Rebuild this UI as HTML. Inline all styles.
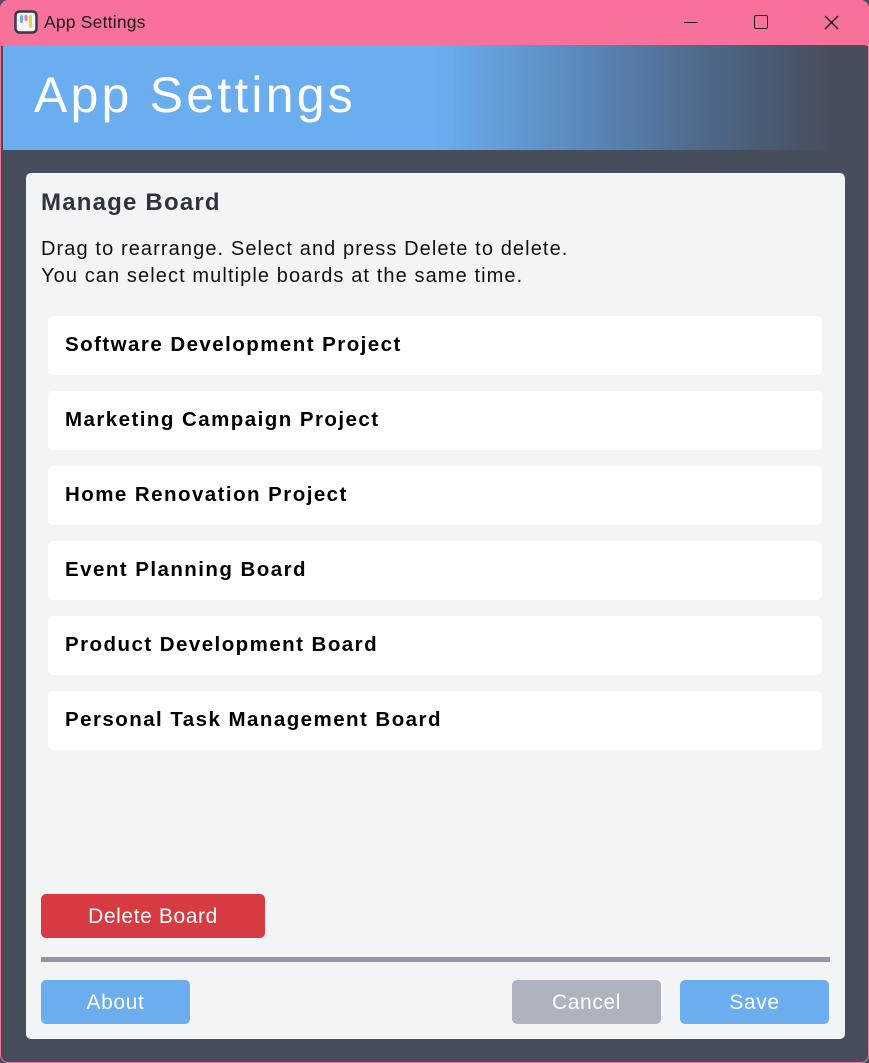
<!DOCTYPE html>
<html><head><meta charset="utf-8"><style>
*{margin:0;padding:0;box-sizing:border-box}
body{width:869px;height:1063px;background:#464e5c;font-family:"Liberation Sans",sans-serif;position:relative;overflow:hidden}
.win{position:absolute;left:0;top:0;width:869px;height:1063px;border:1px solid #f8719b;border-radius:8px;background:#464e5c;overflow:hidden}
.tb{position:absolute;left:-1px;top:-1px;width:869px;height:46px;background:#f8719b}
.tb .t{position:absolute;left:44px;top:12px;font-size:17.5px;color:#1a1a1a;letter-spacing:0.2px}
.hd{position:absolute;left:2px;top:44px;width:863px;height:105px;background:linear-gradient(90deg,#6aaef0 0%,#6aaef0 50%,#5a86b8 68%,#4e6787 82%,#464e5c 96%)}
.hd span{position:absolute;left:31px;top:21px;font-size:50px;color:#fff;letter-spacing:3.2px}
.pn{position:absolute;left:25px;top:172px;width:819px;height:866px;background:#f3f4f6;border-radius:5px}
.h2{position:absolute;left:15px;top:16px;font-size:24px;font-weight:bold;color:#2d3340;letter-spacing:1.2px}
.d{position:absolute;left:15px;top:63px;font-size:20px;line-height:27px;color:#111;letter-spacing:1.1px}
.it{position:absolute;left:22px;width:774px;height:59px;background:#fff;border-radius:5px;font-weight:bold;font-size:20.5px;color:#000;padding:17px 17px;letter-spacing:1.45px}
.btn{position:absolute;height:44px;border-radius:5px;color:#fff;font-size:21px;text-align:center;line-height:45px;letter-spacing:0.6px}
</style></head><body><div class="win">
<div class="tb">
<svg style="position:absolute;left:14px;top:10px" width="24" height="24" viewBox="0 0 24 24"><rect x="1.5" y="1.5" width="21" height="21" rx="4" fill="#f4f4f4" stroke="#333a48" stroke-width="2.5"/><rect x="6" y="5" width="3" height="8" rx="1.5" fill="#6aaef0"/><rect x="10.5" y="5" width="3" height="6" rx="1.5" fill="#f8719b"/><rect x="15" y="5" width="3" height="13" rx="1.5" fill="#f2d230"/></svg>
<div class="t">App Settings</div>
<div style="position:absolute;left:684px;top:22px;width:14px;height:1px;background:#222"></div>
<div style="position:absolute;left:754px;top:15px;width:14px;height:14px;border:1.5px solid #222;border-radius:2px"></div>
<svg style="position:absolute;left:824px;top:15px" width="15" height="15"><path d="M1 1L14 14M14 1L1 14" stroke="#222" stroke-width="1.5"/></svg>
</div>
<div class="hd"><span>App Settings</span></div>
<div class="pn">
<div class="h2">Manage Board</div>
<div class="d">Drag to rearrange. Select and press Delete to delete.<br>You can select multiple boards at the same time.</div>
<div class="it" style="top:143px">Software Development Project</div>
<div class="it" style="top:218px">Marketing Campaign Project</div>
<div class="it" style="top:293px">Home Renovation Project</div>
<div class="it" style="top:368px">Event Planning Board</div>
<div class="it" style="top:443px">Product Development Board</div>
<div class="it" style="top:518px">Personal Task Management Board</div>
<div class="btn" style="left:15px;top:721px;width:224px;background:#d73a40">Delete Board</div>
<div style="position:absolute;left:15px;top:784px;width:789px;height:5px;background:#9096a2"></div>
<div class="btn" style="left:15px;top:807px;width:149px;background:#6aaef0">About</div>
<div class="btn" style="left:486px;top:807px;width:149px;background:#aeb3bf">Cancel</div>
<div class="btn" style="left:654px;top:807px;width:149px;background:#6aaef0">Save</div>
</div>
</div></body></html>
